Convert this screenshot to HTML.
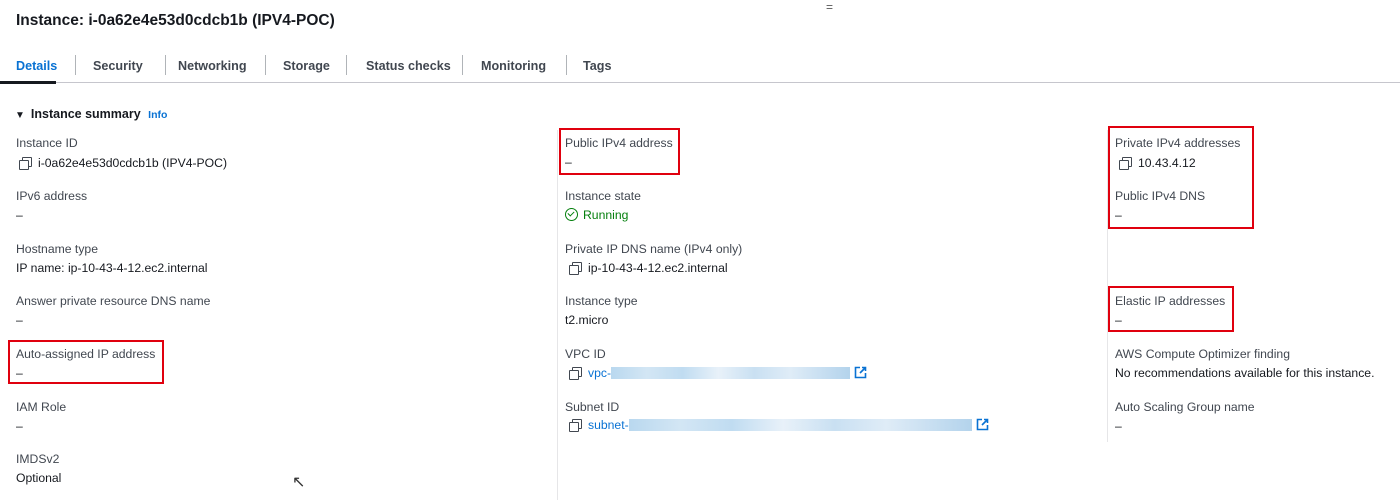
<!DOCTYPE html>
<html><head><meta charset="utf-8"><style>
*{margin:0;padding:0;box-sizing:border-box}
body{width:1400px;height:502px;background:#fff;font-family:"Liberation Sans",sans-serif;color:#16191f;position:relative;overflow:hidden;font-size:12.2px}
.a{position:absolute;white-space:nowrap}
.l{color:#414750}
.v{color:#16191f}
.b{color:#0972d3}
.box{position:absolute;border:2px solid #e0000e}
.tab{position:absolute;top:59px;font-size:12.6px;font-weight:bold;color:#414750}
.sep{position:absolute;top:55px;width:1px;height:20px;background:#b0b4b8}
.cp{display:inline-block;width:11px;height:11px;position:relative;vertical-align:-1px;margin-right:8px}
.cp:before{content:"";position:absolute;left:3px;top:0;width:8px;height:8px;border:1.3px solid #414750;border-radius:1px}
.cp:after{content:"";position:absolute;left:0;top:3px;width:8px;height:8px;border:1.3px solid #414750;border-radius:1px;background:#fff}
.blur{display:inline-block;height:12px;vertical-align:-2px;background:linear-gradient(90deg,#b9d8ef,#d3e6f4 15%,#c0dcf1 30%,#e8f1f9 45%,#c9e0f2 60%,#dfecf7 75%,#b3d3ec)}
</style></head><body>
<div class="a" style="left:16px;top:12px;font-size:15.5px;font-weight:bold">Instance: i-0a62e4e53d0cdcb1b (IPV4-POC)</div>
<div class="a" style="left:826px;top:0px;font-size:12px;color:#555">=</div>
<div class="tab" style="left:16px;color:#0972d3">Details</div>
<div class="sep" style="left:75px"></div>
<div class="tab" style="left:93px">Security</div>
<div class="sep" style="left:165px"></div>
<div class="tab" style="left:178px">Networking</div>
<div class="sep" style="left:265px"></div>
<div class="tab" style="left:283px">Storage</div>
<div class="sep" style="left:346px"></div>
<div class="tab" style="left:366px">Status checks</div>
<div class="sep" style="left:462px"></div>
<div class="tab" style="left:481px">Monitoring</div>
<div class="sep" style="left:566px"></div>
<div class="tab" style="left:583px">Tags</div>
<div class="a" style="left:0;top:82px;width:1400px;height:1px;background:#c6c6cd"></div>
<div class="a" style="left:0;top:81px;width:56px;height:3px;background:#16191f"></div>
<div class="a" style="left:15px;top:107px;font-size:12.5px;font-weight:bold"><span style="font-size:10px;margin-right:6px">▼</span>Instance summary <span style="color:#0972d3;font-size:10.5px;margin-left:4px">Info</span></div>
<div class="a" style="left:557px;top:130px;width:1px;height:370px;background:#e6e6e8"></div>
<div class="a" style="left:1107px;top:130px;width:1px;height:312px;background:#e6e6e8"></div>

<div class="a l" style="left:16px;top:136px">Instance ID</div>
<div class="a v" style="left:19px;top:156px"><span class="cp"></span>i-0a62e4e53d0cdcb1b (IPV4-POC)</div>
<div class="a l" style="left:16px;top:189px">IPv6 address</div>
<div class="a v" style="left:16px;top:208px">–</div>
<div class="a l" style="left:16px;top:242px">Hostname type</div>
<div class="a v" style="left:16px;top:261px">IP name: ip-10-43-4-12.ec2.internal</div>
<div class="a l" style="left:16px;top:294px">Answer private resource DNS name</div>
<div class="a v" style="left:16px;top:313px">–</div>
<div class="a l" style="left:16px;top:347px">Auto-assigned IP address</div>
<div class="a v" style="left:16px;top:366px">–</div>
<div class="a l" style="left:16px;top:400px">IAM Role</div>
<div class="a v" style="left:16px;top:419px">–</div>
<div class="a l" style="left:16px;top:452px">IMDSv2</div>
<div class="a v" style="left:16px;top:471px">Optional</div>

<div class="a l" style="left:565px;top:136px">Public IPv4 address</div>
<div class="a v" style="left:565px;top:155px">–</div>
<div class="a l" style="left:565px;top:189px">Instance state</div>
<div class="a" style="left:565px;top:208px;color:#037f0c"><span style="display:inline-block;width:13px;height:13px;border:1.6px solid #037f0c;border-radius:50%;vertical-align:-2px;margin-right:5px;position:relative"><span style="position:absolute;left:3px;top:1px;width:4px;height:6px;border-right:1.6px solid #037f0c;border-bottom:1.6px solid #037f0c;transform:rotate(45deg)"></span></span>Running</div>
<div class="a l" style="left:565px;top:242px">Private IP DNS name (IPv4 only)</div>
<div class="a v" style="left:569px;top:261px"><span class="cp"></span>ip-10-43-4-12.ec2.internal</div>
<div class="a l" style="left:565px;top:294px">Instance type</div>
<div class="a v" style="left:565px;top:313px">t2.micro</div>
<div class="a l" style="left:565px;top:347px">VPC ID</div>
<div class="a b" style="left:569px;top:366px"><span class="cp"></span>vpc-<span class="blur" style="width:239px"></span><svg width="13" height="13" viewBox="0 0 13 13" style="vertical-align:-2px;margin-left:4px"><path d="M6 1.5H1.5v10h10V7M8 1.5h3.5V5M11.5 1.5L6 7" fill="none" stroke="#0972d3" stroke-width="1.6"/></svg></div>
<div class="a l" style="left:565px;top:400px">Subnet ID</div>
<div class="a b" style="left:569px;top:418px"><span class="cp"></span>subnet-<span class="blur" style="width:343px"></span><svg width="13" height="13" viewBox="0 0 13 13" style="vertical-align:-2px;margin-left:4px"><path d="M6 1.5H1.5v10h10V7M8 1.5h3.5V5M11.5 1.5L6 7" fill="none" stroke="#0972d3" stroke-width="1.6"/></svg></div>

<div class="a l" style="left:1115px;top:136px">Private IPv4 addresses</div>
<div class="a v" style="left:1119px;top:156px"><span class="cp"></span>10.43.4.12</div>
<div class="a l" style="left:1115px;top:189px">Public IPv4 DNS</div>
<div class="a v" style="left:1115px;top:208px">–</div>
<div class="a l" style="left:1115px;top:294px">Elastic IP addresses</div>
<div class="a v" style="left:1115px;top:313px">–</div>
<div class="a l" style="left:1115px;top:347px">AWS Compute Optimizer finding</div>
<div class="a v" style="left:1115px;top:366px">No recommendations available for this instance.</div>
<div class="a l" style="left:1115px;top:400px">Auto Scaling Group name</div>
<div class="a v" style="left:1115px;top:419px">–</div>

<div class="box" style="left:559px;top:128px;width:121px;height:47px"></div>
<div class="box" style="left:1108px;top:126px;width:146px;height:103px"></div>
<div class="box" style="left:1108px;top:286px;width:126px;height:46px"></div>
<div class="box" style="left:8px;top:340px;width:156px;height:44px"></div>
<div class="a" style="left:292px;top:472px;font-size:16px;color:#333">↖</div>
</body></html>
